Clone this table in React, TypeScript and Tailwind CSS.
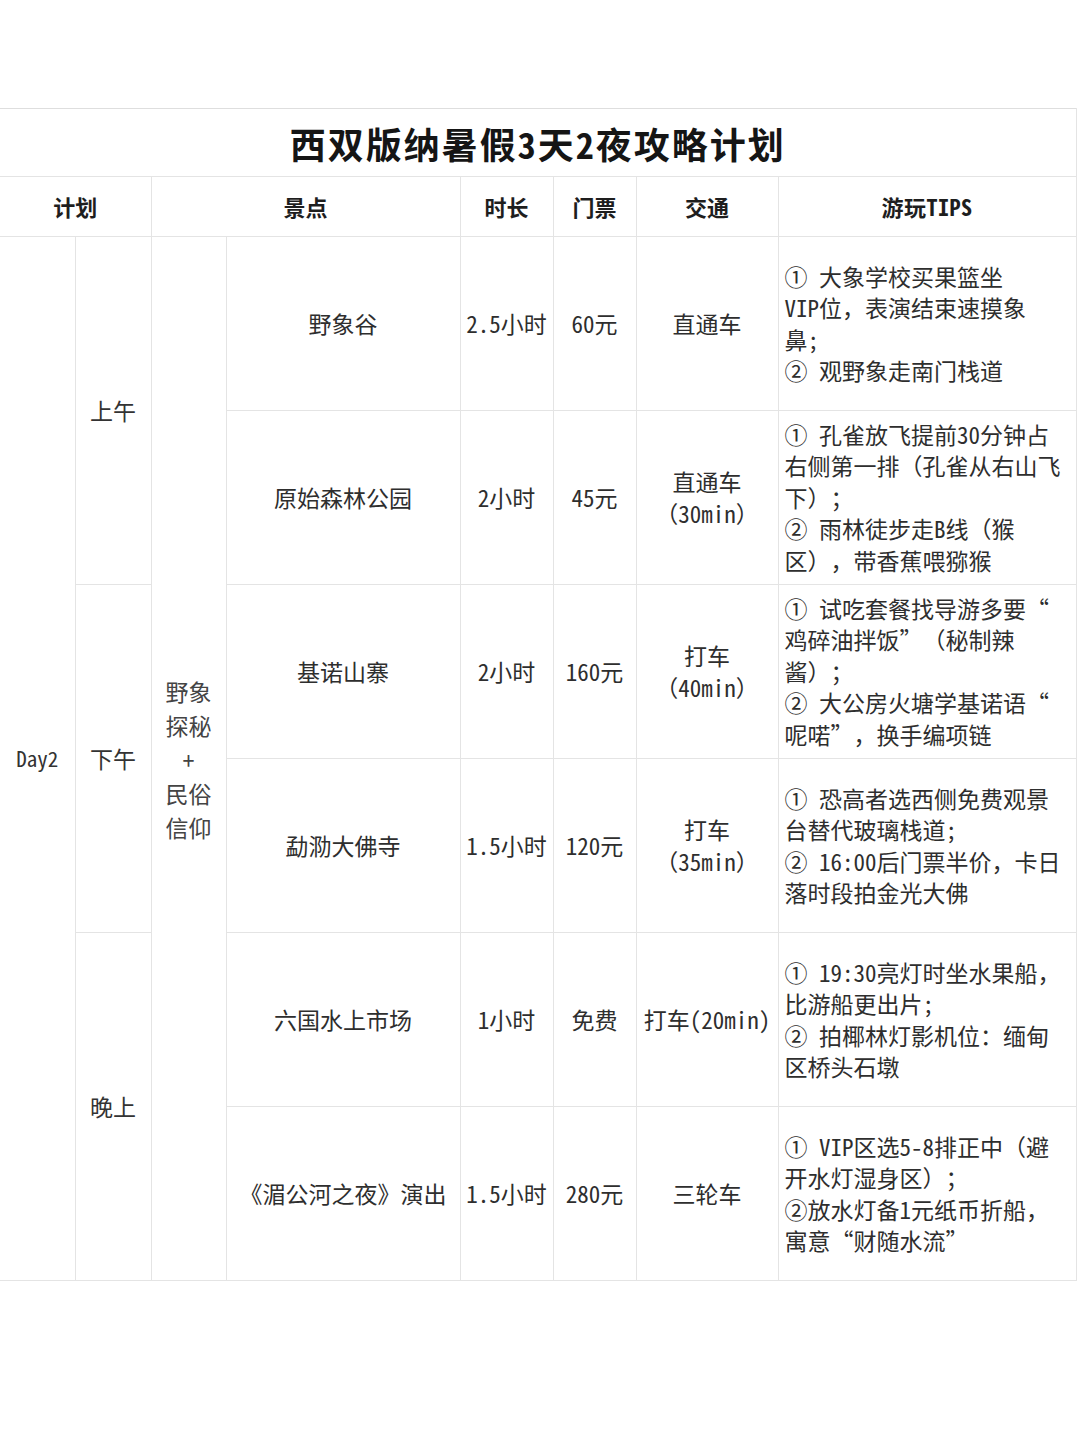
import React from "react";

const FONT = {
  fontFamily:
    '"Noto Sans Mono CJK SC", "Noto Sans CJK SC", "Noto Sans", sans-serif',
};

type Row = {
  name: string;
  dur: string;
  price: string;
  traffic: string[];
  tips: string[];
};

const rows: Row[] = [
  {
    name: "野象谷",
    dur: "2.5小时",
    price: "60元",
    traffic: ["直通车"],
    tips: ["① 大象学校买果篮坐", "VIP位，表演结束速摸象", "鼻;", "② 观野象走南门栈道"],
  },
  {
    name: "原始森林公园",
    dur: "2小时",
    price: "45元",
    traffic: ["直通车", "（30min）"],
    tips: [
      "① 孔雀放飞提前30分钟占",
      "右侧第一排（孔雀从右山飞",
      "下）；",
      "② 雨林徒步走B线（猴",
      "区），带香蕉喂猕猴",
    ],
  },
  {
    name: "基诺山寨",
    dur: "2小时",
    price: "160元",
    traffic: ["打车", "（40min）"],
    tips: [
      "① 试吃套餐找导游多要“",
      "鸡碎油拌饭”（秘制辣",
      "酱）；",
      "② 大公房火塘学基诺语“",
      "呢喏”，换手编项链",
    ],
  },
  {
    name: "勐泐大佛寺",
    dur: "1.5小时",
    price: "120元",
    traffic: ["打车", "（35min）"],
    tips: ["① 恐高者选西侧免费观景", "台替代玻璃栈道;", "② 16:00后门票半价，卡日", "落时段拍金光大佛"],
  },
  {
    name: "六国水上市场",
    dur: "1小时",
    price: "免费",
    traffic: ["打车(20min)"],
    tips: ["① 19:30亮灯时坐水果船，", "比游船更出片;", "② 拍椰林灯影机位：缅甸", "区桥头石墩"],
  },
  {
    name: "《湄公河之夜》演出",
    dur: "1.5小时",
    price: "280元",
    traffic: ["三轮车"],
    tips: ["① VIP区选5-8排正中（避", "开水灯湿身区）；", "②放水灯备1元纸币折船，", "寓意“财随水流”"],
  },
];

const cell = "border border-[#e4e4e4] p-0 align-middle text-center";

export default function App() {
  return (
    <div
      className="w-[1080px] h-[1443px] bg-white text-[#2e2e2e] [text-spacing-trim:space-all]"
      style={FONT}
    >
      <div className="h-[108px]" />
      <table className="table-fixed border-collapse w-[1076px] border-t border-[#dedede]">
        <colgroup>
          <col className="w-[75px]" />
          <col className="w-[76px]" />
          <col className="w-[75px]" />
          <col className="w-[234px]" />
          <col className="w-[93px]" />
          <col className="w-[83px]" />
          <col className="w-[142px]" />
          <col className="w-[298px]" />
        </colgroup>
        <tbody>
          <tr className="h-[68px]">
            <td
              colSpan={8}
              className={`${cell} border-l-0 border-t-0 text-[36px] font-bold text-[#151515] tracking-[2px]`}
            >
              西双版纳暑假3天2夜攻略计划
            </td>
          </tr>
          <tr className="h-[60px] text-[22px] font-bold text-[#1e1e1e]">
            <td colSpan={2} className={`${cell} border-l-0`}>
              计划
            </td>
            <td colSpan={2} className={cell}>
              景点
            </td>
            <td className={cell}>时长</td>
            <td className={cell}>门票</td>
            <td className={cell}>交通</td>
            <td className={`${cell} tracking-[0.5px]`}>游玩TIPS</td>
          </tr>
          {rows.map((r, i) => (
            <tr key={i} className="h-[174px] text-[23px] leading-[31.5px]">
              {i === 0 && (
                <td rowSpan={6} className={`${cell} border-l-0 text-[21px] font-medium text-[#333]`}>
                  Day2
                </td>
              )}
              {i % 2 === 0 && (
                <td rowSpan={2} className={`${cell} text-[#333]`}>
                  {["上午", "下午", "晚上"][i / 2]}
                </td>
              )}
              {i === 0 && (
                <td rowSpan={6} className={`${cell} text-[#444] leading-[34px]`}>
                  <div>野象</div>
                  <div>探秘</div>
                  <div>+</div>
                  <div>民俗</div>
                  <div>信仰</div>
                </td>
              )}
              <td className={`${cell} whitespace-nowrap`}>{r.name}</td>
              <td className={`${cell} whitespace-nowrap`}>{r.dur}</td>
              <td className={`${cell} whitespace-nowrap`}>{r.price}</td>
              <td className={`${cell} whitespace-nowrap`}>
                {r.traffic.map((t, k) => (
                  <div key={k}>{t}</div>
                ))}
              </td>
              <td className={`${cell} text-left pl-[6px] whitespace-nowrap`}>
                {r.tips.map((t, k) => (
                  <div key={k}>{t}</div>
                ))}
              </td>
            </tr>
          ))}
        </tbody>
      </table>
    </div>
  );
}
